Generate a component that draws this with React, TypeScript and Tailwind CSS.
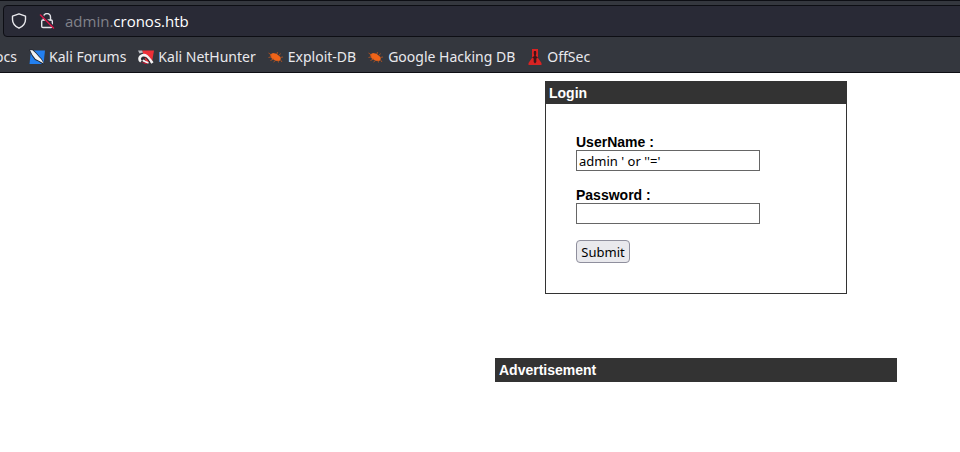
import type { ReactNode } from "react";

function ForumsIcon() {
  return (
    <svg viewBox="0 0 16 16" className="size-4 shrink-0" aria-hidden="true">
      <path d="M2 1.500h14L14.500 15H.5z" fill="#2380f0" />
      <path d="M0 .5h4L7.500 4l3 3.500 2 2 3 5.200-1.500.8-4.500-3L6 11 3 7z" fill="#22252d" />
      <path d="M1 1l2.500 .3L7 4.500l3 3.500 2 2 2.800 4.500-4.500-2.500L6.500 10 3.500 6z" fill="#f2f3f5" />
    </svg>
  );
}

function NetHunterIcon() {
  return (
    <svg viewBox="0 0 16 16" className="size-4 shrink-0" aria-hidden="true">
      <path d="M4 1.500h12L14 13H8z" fill="#ee2f37" />
      <path d="M0 1.500h4l1 2-3.500 1z" fill="#b9bcc2" />
      <path d="M3 12.500C0 10 2 6.200 6 6c3.500 0 4.500 3 8.500 8" fill="none" stroke="#f3f3f4" strokeWidth="2.600" />
      <path d="M4.500 10.500c0-2.500 3.500-2.800 5-.3l2.500 3.300" fill="none" stroke="#24262e" strokeWidth="1.100" />
      <path d="M5 11c1 1.800 3 2.300 5.500 3" fill="none" stroke="#f3f3f4" strokeWidth="1.700" />
      <path d="M3 13l4 2h3.500l-3.500-1.500z" fill="#bd1830" />
    </svg>
  );
}

function BugIcon() {
  return (
    <svg viewBox="0 0 16 16" className="size-4 shrink-0" aria-hidden="true">
      <path d="M2 5.500L5 4l3.500 .8 3 2.400L13 10l-1.700 2-3.800-.3-4-2.400z" fill="#f06418" />
      <path
        d="M.5 4l3 2M.5 8.500l3-.7M2.500 11.500L5.500 10M5.500 13l2-1.500M9 5l.5-2M11 6.500L12.500 4.500M12 8.500l3-.5M12.500 11l1.500 2M10 11.500l.5 2"
        stroke="#b05222"
        strokeWidth="0.900"
        fill="none"
      />
    </svg>
  );
}

function OffSecIcon() {
  return (
    <svg viewBox="0 0 16 16" className="size-4 shrink-0" aria-hidden="true">
      <path d="M5 0h6v9l3.500 5v2h-13v-2L5 9z" fill="#d92323" />
      <path d="M7 2h2l.3 2-.5 3 2.200 1.500-1.700 1V13L8 14.500 6.700 13V9.500L5 8.500 7.300 7 6.700 4z" fill="#3b1519" />
    </svg>
  );
}

function ShieldIcon() {
  return (
    <svg viewBox="0 0 16 16" className="size-4" fill="none" stroke="#e9e9ed" strokeWidth="1.400" strokeLinejoin="round" aria-hidden="true">
      <path d="M8 .8l6.500 2.400v3.300c0 3.800-2.600 6.900-6.500 8.700-3.900-1.800-6.500-4.900-6.500-8.700V3.200z" />
    </svg>
  );
}

function InsecureIcon() {
  return (
    <svg viewBox="0 0 16 16" className="size-4" fill="none" strokeLinecap="round" aria-hidden="true">
      <path d="M4.500 7V4a3.500 3.500 0 0 1 7 0v3" stroke="#e3e3e8" strokeWidth="1.400" />
      <rect x="2.700" y="7" width="10.600" height="7.500" rx="1.300" stroke="#e3e3e8" strokeWidth="1.400" />
      <path d="M2.500 2l13 13" stroke="#292a36" strokeWidth="2.400" />
      <path d="M1.500 2l13 13" stroke="#dc1748" strokeWidth="1.500" />
    </svg>
  );
}

function Bookmark({ icon, children }: { icon: ReactNode; children: ReactNode }) {
  return (
    <a href="#" className="flex shrink-0 items-center gap-1">
      {icon}
      <span>{children}</span>
    </a>
  );
}

function Field({ id, label, type, value }: { id: string; label: string; type: string; value?: string }) {
  return (
    <div className="mb-4">
      <label htmlFor={id} className="block text-sm leading-4 font-bold">
        {label}
      </label>
      <input
        id={id}
        name={id}
        type={type}
        defaultValue={value}
        className="block h-[21px] w-[184px] border border-[#666] bg-white px-0.5 font-['Noto_Sans',sans-serif] text-[13px] outline-none"
      />
    </div>
  );
}

export default function App() {
  return (
    <div className="min-h-screen bg-white font-['Liberation_Sans',Arial,sans-serif] text-black">
      <header className="overflow-hidden border-y border-[#0d0e14] bg-[#34373e] pt-1 font-['Noto_Sans',sans-serif] text-[#e9e9ed]">
        <div className="-mr-2 ml-[3px] flex h-8 items-center gap-[10px] rounded border border-[#0d0e14] bg-[#292a36] pl-[7px]">
          <div className="flex items-center gap-3">
            <button type="button" aria-label="Tracking protection">
              <ShieldIcon />
            </button>
            <button type="button" aria-label="Connection not secure">
              <InsecureIcon />
            </button>
          </div>
          <p className="font-['Open_Sans','Noto_Sans',sans-serif] text-[15px]">
            <span className="text-[#81828a]">admin.</span>
            <span className="text-white">cronos.htb</span>
          </p>
        </div>
        <nav aria-label="Bookmarks" className="flex h-[35px] items-center gap-3 pt-1 text-sm whitespace-nowrap">
          <a href="#" className="flex w-[17px] shrink-0 justify-end overflow-hidden">
            Docs
          </a>
          <Bookmark icon={<ForumsIcon />}>Kali Forums</Bookmark>
          <Bookmark icon={<NetHunterIcon />}>Kali NetHunter</Bookmark>
          <Bookmark icon={<BugIcon />}>Exploit-DB</Bookmark>
          <Bookmark icon={<BugIcon />}>Google Hacking DB</Bookmark>
          <Bookmark icon={<OffSecIcon />}>OffSec</Bookmark>
        </nav>
      </header>
      <main className="flex flex-col items-center gap-16 pt-2 pl-[432px]">
        <section className="w-[302px] border border-[#333]">
          <h1 className="bg-[#333] p-[3px] text-sm leading-4 font-bold text-white">Login</h1>
          <form className="p-[30px]" onSubmit={(event) => event.preventDefault()}>
            <Field id="username" label="UserName :" type="text" value="admin ' or ''='" />
            <Field id="password" label="Password :" type="password" />
            <button
              type="submit"
              className="block h-[23px] w-[54px] rounded border border-[#8f8f9d] bg-[#e9e9ed] pt-px text-center font-['Noto_Sans',sans-serif] text-[13px] leading-5"
            >
              Submit
            </button>
          </form>
        </section>
        <section className="w-[402px]">
          <h2 className="bg-[#333] p-1 text-sm leading-4 font-bold text-white">Advertisement</h2>
        </section>
      </main>
    </div>
  );
}
